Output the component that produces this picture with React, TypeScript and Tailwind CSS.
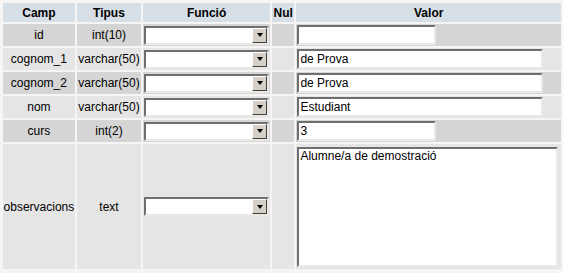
import React from 'react';

type Row = { camp: string; tipus: string; valor: string; size: 'short' | 'long' | 'area' };

const ROWS: Row[] = [
  { camp: 'id', tipus: 'int(10)', valor: '', size: 'short' },
  { camp: 'cognom_1', tipus: 'varchar(50)', valor: 'de Prova', size: 'long' },
  { camp: 'cognom_2', tipus: 'varchar(50)', valor: 'de Prova', size: 'long' },
  { camp: 'nom', tipus: 'varchar(50)', valor: 'Estudiant', size: 'long' },
  { camp: 'curs', tipus: 'int(2)', valor: '3', size: 'short' },
  { camp: 'observacions', tipus: 'text', valor: 'Alumne/a de demostració', size: 'area' },
];

const inset =
  'border-2 border-t-[#6f6f6f] border-l-[#6f6f6f] border-b-[#ece9e4] border-r-[#ece9e4] bg-white outline-none';

const FuncSelect: React.FC = () => (
  <div className={`relative h-[19px] w-[125px] ${inset}`}>
    <select className="h-full w-full appearance-none bg-white text-[12px] outline-none" defaultValue="">
      <option value=""></option>
    </select>
    {/* fake windows dropdown button */}
    <div className="pointer-events-none absolute right-0 top-0 flex h-[15px] w-[15px] items-center justify-center border border-t-white border-l-white border-b-[#404040] border-r-[#404040] bg-[#d4d0c8]">
      <div className="h-0 w-0 border-x-[3.5px] border-t-[4px] border-x-transparent border-t-black" />
    </div>
  </div>
);

const App: React.FC = () => {
  return (
    <div className="h-[273px] w-[563px] bg-[#f5f5f5] pl-[1px] pt-[1px] font-['Liberation_Sans',Arial,sans-serif] text-[12px] text-black">
      <table className="table-fixed border-separate border-spacing-[2px]">
        <colgroup>
          <col className="w-[72px]" />
          <col className="w-[65px]" />
          <col className="w-[127px]" />
          <col className="w-[23px]" />
          <col className="w-[265px]" />
        </colgroup>
        <thead>
          <tr className="h-[19px] bg-[#d6dee6] font-bold">
            <th className="p-0">Camp</th>
            <th className="p-0">Tipus</th>
            <th className="p-0">Funció</th>
            <th className="p-0">Nul</th>
            <th className="p-0">Valor</th>
          </tr>
        </thead>
        <tbody>
          {ROWS.map((r, i) => (
            <tr
              key={r.camp}
              className={`${r.size === 'area' ? 'h-[125px]' : 'h-[22px]'} ${i % 2 === 0 ? 'bg-[#d5d5d5]' : 'bg-[#e5e5e5]'}`}
            >
              <td className="p-0 text-center">{r.camp}</td>
              <td className="p-0 text-center">{r.tipus}</td>
              <td className="py-0 pl-[1px] pr-0">
                <FuncSelect />
              </td>
              <td className="p-0"></td>
              <td className="py-0 pl-[1px] pr-0">
                {r.size === 'area' ? (
                  <textarea
                    defaultValue={r.valor}
                    className={`block h-[120px] w-[261px] resize-none px-[1px] text-[12px] leading-[14px] ${inset}`}
                  />
                ) : (
                  <input
                    defaultValue={r.valor}
                    className={`block h-[20px] ${r.size === 'short' ? 'w-[139px]' : 'w-[246px]'} px-[1px] text-[12px] ${inset}`}
                  />
                )}
              </td>
            </tr>
          ))}
        </tbody>
      </table>
    </div>
  );
};

export default App;
